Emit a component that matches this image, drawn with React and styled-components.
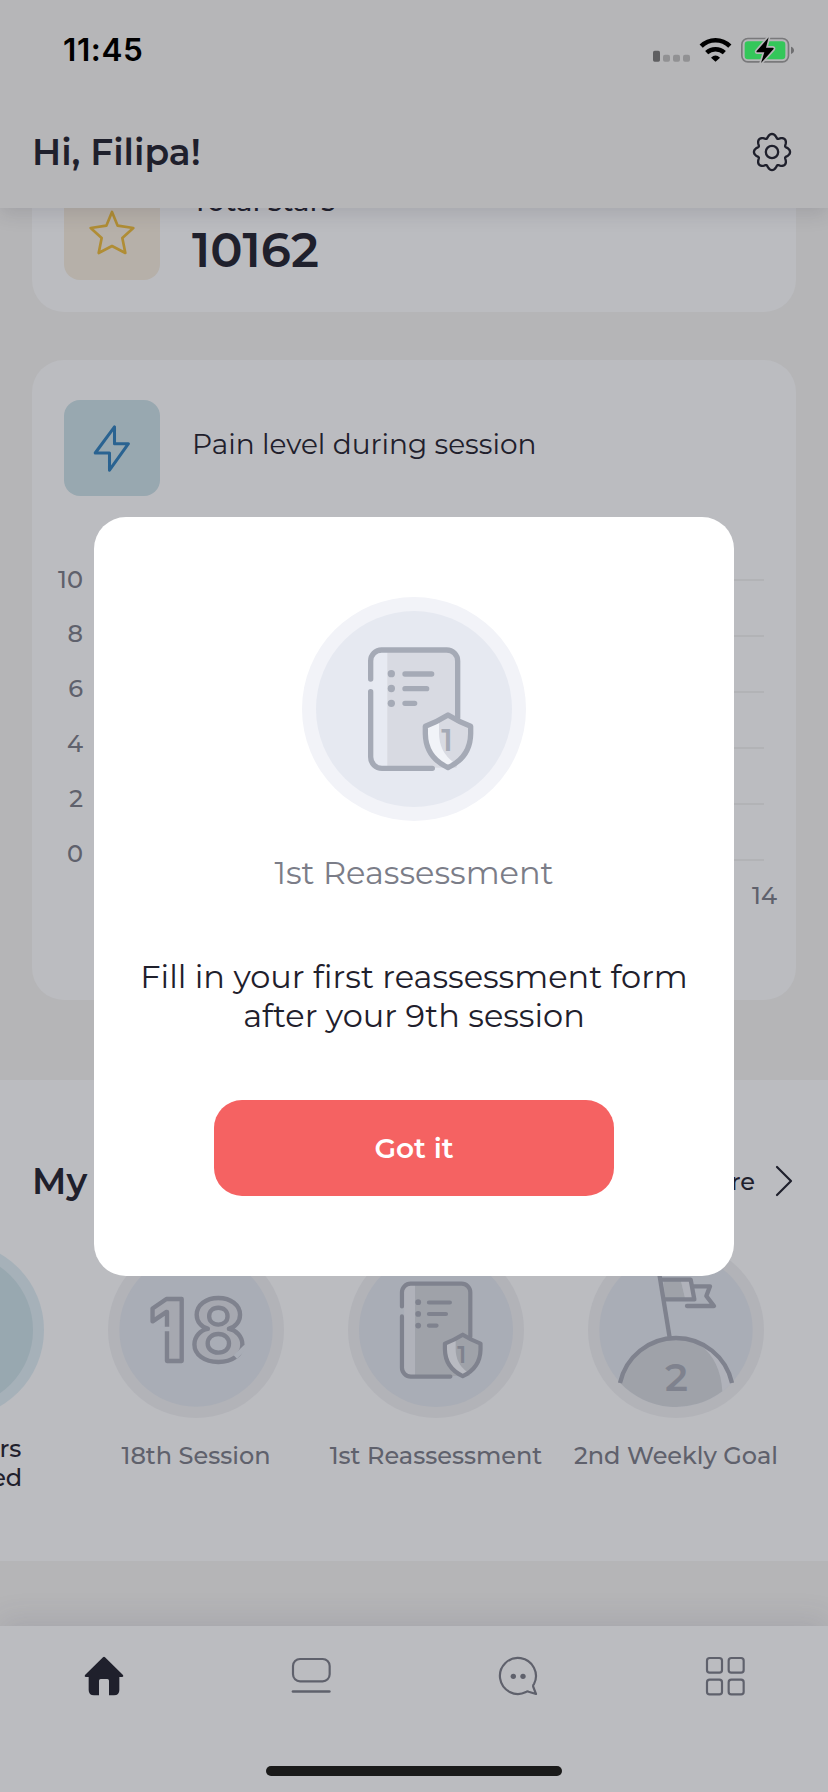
import React from 'react';
import styled, { createGlobalStyle } from 'styled-components';

const ink = '#1f202c';
const muted = '#5f616c';
const surface = '#bbbcc0';
const backdrop = '#b5b5b7';

const GlobalStyle = createGlobalStyle`
  *, *::before, *::after { box-sizing: border-box; }
  body {
    margin: 0;
    background: ${backdrop};
    color: ${ink};
    font-family: Montserrat, Inter, sans-serif;
  }
  svg { display: block; flex: none; }
`;

const Screen = styled.div`
  position: relative;
  width: 828px;
  height: 1792px;
  overflow: hidden;
  display: flex;
  flex-direction: column;
  background: ${backdrop};
`;

const Header = styled.header`
  position: relative;
  z-index: 1;
  flex: none;
  height: 208px;
  background: #b6b6b8;
  box-shadow: 0 6px 18px rgba(30, 30, 45, 0.13);
`;

const StatusBar = styled.div`
  display: flex;
  align-items: center;
  justify-content: space-between;
  height: 99px;
  padding: 0 32px 0 63px;
`;

const Clock = styled.span`
  font: 600 31.5px/40px Inter, sans-serif;
  letter-spacing: 0.6px;
  color: #000;
`;

const Greeting = styled.div`
  display: flex;
  align-items: center;
  justify-content: space-between;
  height: 106px;
  padding: 0 36px 0 32px;
`;

const Heading = styled.h1`
  margin: 0;
  font-size: 36px;
  line-height: 42px;
  font-weight: 600;
`;

const Content = styled.main`
  flex: 1;
  min-height: 0;
  overflow: hidden;
`;

const Scrolled = styled.div`
  margin-top: -56px;
`;

const Card = styled.section`
  margin: 0 32px 48px;
  height: ${(p) => p.$height}px;
  padding: ${(p) => p.$top}px 32px 0;
  border-radius: 32px;
  background: ${surface};
`;

const CardHead = styled.div`
  display: flex;
  gap: 32px;
`;

const Tile = styled.div`
  display: flex;
  align-items: center;
  justify-content: center;
  width: 96px;
  height: 96px;
  border-radius: 16px;
  background: ${(p) => p.$color};
`;

const Stat = styled.div`
  display: flex;
  flex-direction: column;
  gap: 4px;
`;

const StatLabel = styled.span`
  font-size: 28px;
  line-height: 34px;
  font-weight: 500;
`;

const StatValue = styled.span`
  font-size: 48px;
  line-height: 56px;
  font-weight: 600;
`;

const CardTitle = styled.h2`
  align-self: center;
  margin: 0;
  padding-bottom: 8px;
  font-size: 28px;
  line-height: 34px;
  font-weight: 400;
`;

const Chart = styled.div`
  display: flex;
  justify-content: space-between;
  margin: 55.5px 0 0 -12px;
  color: ${muted};
  font-size: 24px;
  font-weight: 500;
`;

const YAxis = styled.div`
  width: 31px;
  padding-top: 1px;
`;

const YLabel = styled.div`
  height: 54.9px;
  line-height: 54.9px;
  text-align: right;
`;

const Plot = styled.div`
  width: 664px;
  padding-top: 27.5px;
`;

const GridLine = styled.div`
  height: ${(p) => (p.$last ? 23 : 56)}px;
  border-top: 2px solid #b2b3b6;
`;

const XAxis = styled.div`
  display: flex;
  justify-content: flex-end;
  margin-right: -13px;
  line-height: 28px;
`;

const Achievements = styled.section`
  height: 481px;
  margin-top: 80px;
  padding-top: 80px;
  background: ${surface};
  overflow: hidden;
`;

const SectionHead = styled.div`
  display: flex;
  align-items: center;
  justify-content: space-between;
  height: 42px;
  padding: 0 34px 0 32px;
`;

const More = styled.div`
  display: flex;
  align-items: center;
  gap: 19px;
  font-size: 24px;
  font-weight: 500;
`;

const BadgeStrip = styled.div`
  display: flex;
  width: 960px;
  margin: 40px 0 0 -164px;
`;

const BadgeItem = styled.div`
  flex: 0 0 240px;
  display: flex;
  flex-direction: column;
  align-items: center;
  gap: 16px;
`;

const BadgeLabel = styled.div`
  text-align: center;
  white-space: pre-line;
  font-size: 24px;
  font-weight: 500;
  line-height: ${(p) => (p.$earned ? 29 : 43)}px;
  color: ${(p) => (p.$earned ? ink : muted)};
`;

const TabBar = styled.nav`
  position: relative;
  flex: none;
  height: 166px;
  background: ${surface};
  box-shadow: 0 -6px 28px rgba(60, 60, 90, 0.12);
`;

const Tabs = styled.div`
  display: grid;
  grid-template-columns: repeat(4, 1fr);
  justify-items: center;
  padding-top: 30px;
`;

const HomeIndicator = styled.div`
  width: 296px;
  height: 10px;
  margin: 70px auto 0;
  border-radius: 5px;
  background: #1a1a1a;
`;

const Overlay = styled.div`
  position: absolute;
  inset: 0;
  z-index: 2;
  display: flex;
  justify-content: center;
  align-items: flex-start;
  padding-top: 517px;
`;

const Dialog = styled.div`
  display: flex;
  flex-direction: column;
  align-items: center;
  width: 640px;
  height: 759px;
  padding: 80px 0;
  border-radius: 32px;
  background: #fff;
`;

const DialogTitle = styled.h2`
  margin: 33px 0 0;
  font-size: 32px;
  line-height: 38px;
  font-weight: 400;
  color: #7b7d88;
`;

const DialogText = styled.p`
  margin: 65px 0;
  text-align: center;
  font-size: 32px;
  line-height: 39px;
`;

const Button = styled.button`
  width: 400px;
  height: 96px;
  border: 0;
  border-radius: 28px;
  background: #f56262;
  color: #fff;
  font: 600 28px/34px Montserrat, Inter, sans-serif;
`;

const litPalette = { ring: '#f2f3f8', disc: '#e6e9f1', strip: '#e7eaf2', shade: '#d8dae2', glow: '#f1f3f8', line: '#a5aab6' };
const dimPalette = { ring: '#b2b3b8', disc: '#a9adb6', strip: '#b0b2ba', shade: '#9fa2a9', glow: '#b8bac1', line: '#7f828e' };

function StatusIcons() {
  return (
    <svg width="144" height="30" viewBox="156 103 432 90">
      <rect x="159" y="150" width="21" height="33" rx="5" fill="#5f5f61" />
      {[189, 219, 249].map((x) => (
        <rect key={x} x={x} y="162" width="21" height="21" rx="6" fill="#919193" />
      ))}
      <g fill="none" stroke="#000" strokeWidth="13.5">
        <path d="M303.5 136.5A60.5 60.5 0 0 1 389.5 136.5" />
        <path d="M320 156A39 39 0 0 1 373 156" />
      </g>
      <path d="M346.5 183L333 171Q346.5 158 360 171Z" />
      <rect x="425.5" y="113.5" width="140" height="70" rx="18" fill="none" stroke="#79797b" strokeWidth="5" />
      <rect x="434" y="122" width="122" height="54" rx="10" fill="#34c75a" />
      <path d="M573 138Q582 141 582 149T573 160Z" fill="#6f6f71" />
      <path
        d="M506 110L470 151Q468 155 472 155H493L483 187L520 146Q523 142 518 141H498Z"
        stroke="#b6b6b8" strokeWidth="10" strokeLinejoin="round" paintOrder="stroke"
      />
    </svg>
  );
}

function GearIcon() {
  const points = Array.from({ length: 144 }, (_, i) => {
    const a = (i / 144) * Math.PI * 2;
    const r = 48.5 + 5.6 * Math.cos(8 * a);
    const t = a + 0.035 * Math.sin(8 * a);
    return `${(60 + r * Math.cos(t)).toFixed(2)},${(60 + r * Math.sin(t)).toFixed(2)}`;
  });
  return (
    <svg width="40" height="40" viewBox="0 0 120 120" fill="none" stroke={ink} strokeWidth="7" strokeLinejoin="round">
      <polygon points={points.join(' ')} />
      <circle cx="60" cy="60" r="18.5" />
    </svg>
  );
}

function StarIcon() {
  return (
    <svg width="48" height="48" viewBox="264 624 144 144" fill="none" stroke="#b08d35" strokeWidth="8" strokeLinejoin="round">
      <path d="M336 636L353 677L400 684L367 714L376 759L336 738L296 759L305 714L272 684L319 677Z" />
    </svg>
  );
}

function BoltIcon() {
  return (
    <svg width="50" height="50" viewBox="244 204 140 140" fill="none" stroke="#2a6391" strokeWidth="8.5" strokeLinejoin="round">
      <path d="M321 215V262H360L307 336V288H267Z" />
    </svg>
  );
}

function Chevron() {
  return (
    <svg width="20" height="34" viewBox="0 0 20 34" fill="none" stroke={ink} strokeWidth="2.2" strokeLinecap="round" strokeLinejoin="round">
      <path d="M3 3L17 17L3 31" />
    </svg>
  );
}

function ReassessmentBadge({ size, palette: c }) {
  return (
    <svg width={size} height={size} viewBox="66 50 672 672">
      <circle cx="402" cy="386" r="336" fill={c.ring} />
      <circle cx="402" cy="386" r="294" fill={c.disc} />
      <path d="M322 214H304Q280 218 280 242V530Q280 558 306 562H322Z" fill={c.strip} />
      <path d="M322 212H499Q530 212 530 242V562H322Z" fill={c.shade} />
      <g fill="none" stroke={c.line} strokeWidth="16" strokeLinecap="round" strokeLinejoin="round">
        <path d="M272 296V242A33 33 0 0 1 305 209H500A33 33 0 0 1 533 242V412" />
        <path d="M272 334V530A34 34 0 0 0 306 564H457" />
        <path d="M375 281H455M375 325H440M375 369H404" />
      </g>
      {[280, 324.5, 369].map((y) => (
        <circle key={y} cx="334" cy={y} r="11" fill={c.line} />
      ))}
      <path d="M504 404Q536 424 572 438V460Q571 530 504 562Q437 530 436 460V438Q472 424 504 404Z" fill={c.shade} />
      <path d="M477 418L436 438V460Q437 530 504 562L522 547Q476 515 477 455Z" fill={c.glow} />
      <path
        d="M504 404Q536 424 572 438V460Q571 530 504 562Q437 530 436 460V438Q472 424 504 404Z"
        fill="none" stroke={c.line} strokeWidth="16" strokeLinejoin="round"
      />
      <text x="501" y="512" textAnchor="middle" fontSize="91" fontWeight="600" fill={c.line}>1</text>
    </svg>
  );
}

function SessionBadge({ palette: c }) {
  return (
    <svg width="176" height="176" viewBox="324 545 528 528">
      <circle cx="588" cy="809" r="264" fill={c.ring} />
      <circle cx="588" cy="809" r="230" fill={c.disc} />
      <g
        fontFamily="Inter, sans-serif" fontSize="257" textAnchor="middle"
        fill="#a6a8b0" stroke={c.line} strokeWidth="13" strokeLinejoin="round"
      >
        <text x="503" y="902" fontWeight="800">1</text>
        <text x="655" y="902" fontWeight="700">8</text>
      </g>
      <path d="M482 806H510M706 890L738 858" stroke={c.disc} strokeWidth="14" />
    </svg>
  );
}

function WeeklyGoalBadge({ palette: c }) {
  return (
    <svg width="176" height="176" viewBox="144 305 528 528">
      <circle cx="408" cy="569" r="264" fill={c.ring} />
      <circle cx="408" cy="569" r="230" fill={c.disc} />
      <path d="M241 728A172 172 0 0 1 576 728A230 230 0 0 1 241 728Z" fill={c.strip} />
      <path d="M241 728Q290 592 408 594Q445 592 480 613Q542 660 547 753A230 230 0 0 1 241 728Z" fill={c.shade} />
      <path d="M370 418H422L436 477H376Z" fill={c.shade} />
      <path d="M422 418H452L463 477H436Z" fill={c.strip} />
      <g fill="none" stroke={c.line} strokeWidth="13" strokeLinejoin="round">
        <path d="M240 728A172 172 0 0 1 576 728" />
        <path d="M348 340L389 592" />
        <path d="M364 418H452L463 477H374" />
        <path d="M458 438H510L499 467L522 497H441" strokeLinecap="round" />
      </g>
      <text x="409" y="751" textAnchor="middle" fontSize="118" fontWeight="600" fill={c.line}>2</text>
    </svg>
  );
}

function EarnedBadge() {
  return (
    <svg width="176" height="176" viewBox="0 0 176 176">
      <circle cx="88" cy="88" r="88" fill="#a6b1b9" />
      <circle cx="88" cy="88" r="77" fill="#98a8b0" />
    </svg>
  );
}

const tabIconProps = { width: 40, height: 40, viewBox: '0 0 120 120', fill: 'none', stroke: muted, strokeWidth: 6.5, strokeLinejoin: 'round' };

function HomeTab() {
  return (
    <svg width="40" height="40" viewBox="0 0 120 120" fill={ink}>
      <path d="M57 4Q60 1 63 4L117 57Q120 62 115 63H106V102Q106 118 90 118H75V74Q75 69 70 69H50Q45 69 45 74V118H30Q14 118 14 102V63H5Q0 62 3 57Z" />
    </svg>
  );
}

function SessionsTab() {
  return (
    <svg {...tabIconProps}>
      <rect x="6" y="9" width="110" height="67" rx="21" />
      <path d="M6 106.5H115" strokeWidth="8" strokeLinecap="round" />
    </svg>
  );
}

function ChatTab() {
  return (
    <svg {...tabIconProps}>
      <path d="M108 84Q104 88 106 93L114 114L92 107Q88 105 84 108A54 54 0 1 1 108 84Z" />
      <g fill={muted} stroke="none">
        <circle cx="46" cy="61" r="8" />
        <circle cx="75" cy="61" r="8" />
      </g>
    </svg>
  );
}

function MenuTab() {
  return (
    <svg {...tabIconProps}>
      {[[6, 6], [71, 6], [6, 71], [71, 71]].map(([x, y]) => (
        <rect key={`${x}-${y}`} x={x} y={y} width="45" height="44" rx="8" />
      ))}
    </svg>
  );
}

export default function App() {
  return (
    <Screen>
      <GlobalStyle />
      <Header>
        <StatusBar>
          <Clock>11:45</Clock>
          <StatusIcons />
        </StatusBar>
        <Greeting>
          <Heading>Hi, Filipa!</Heading>
          <GearIcon />
        </Greeting>
      </Header>

      <Content>
        <Scrolled>
          <Card $height={160} $top={32}>
            <CardHead>
              <Tile $color="#b6b0a9"><StarIcon /></Tile>
              <Stat>
                <StatLabel>Total stars</StatLabel>
                <StatValue>10162</StatValue>
              </Stat>
            </CardHead>
          </Card>

          <Card $height={640} $top={40}>
            <CardHead>
              <Tile $color="#98a8b0"><BoltIcon /></Tile>
              <CardTitle>Pain level during session</CardTitle>
            </CardHead>
            <Chart>
              <YAxis>
                {[10, 8, 6, 4, 2, 0].map((n) => <YLabel key={n}>{n}</YLabel>)}
              </YAxis>
              <Plot>
                {[10, 8, 6, 4, 2, 0].map((n) => <GridLine key={n} $last={n === 0} />)}
                <XAxis>14</XAxis>
              </Plot>
            </Chart>
          </Card>

          <Achievements>
            <SectionHead>
              <Heading as="h2">My badges</Heading>
              <More>See more <Chevron /></More>
            </SectionHead>
            <BadgeStrip>
              <BadgeItem>
                <EarnedBadge />
                <BadgeLabel $earned>{'8000 Stars\ncompleted'}</BadgeLabel>
              </BadgeItem>
              <BadgeItem>
                <SessionBadge palette={dimPalette} />
                <BadgeLabel>18th Session</BadgeLabel>
              </BadgeItem>
              <BadgeItem>
                <ReassessmentBadge size={176} palette={dimPalette} />
                <BadgeLabel>1st Reassessment</BadgeLabel>
              </BadgeItem>
              <BadgeItem>
                <WeeklyGoalBadge palette={dimPalette} />
                <BadgeLabel>2nd Weekly Goal</BadgeLabel>
              </BadgeItem>
            </BadgeStrip>
          </Achievements>
        </Scrolled>
      </Content>

      <TabBar>
        <Tabs>
          <HomeTab />
          <SessionsTab />
          <ChatTab />
          <MenuTab />
        </Tabs>
        <HomeIndicator />
      </TabBar>

      <Overlay>
        <Dialog role="dialog">
          <ReassessmentBadge size={224} palette={litPalette} />
          <DialogTitle>1st Reassessment</DialogTitle>
          <DialogText>
            Fill in your first reassessment form<br />after your 9th session
          </DialogText>
          <Button>Got it</Button>
        </Dialog>
      </Overlay>
    </Screen>
  );
}
